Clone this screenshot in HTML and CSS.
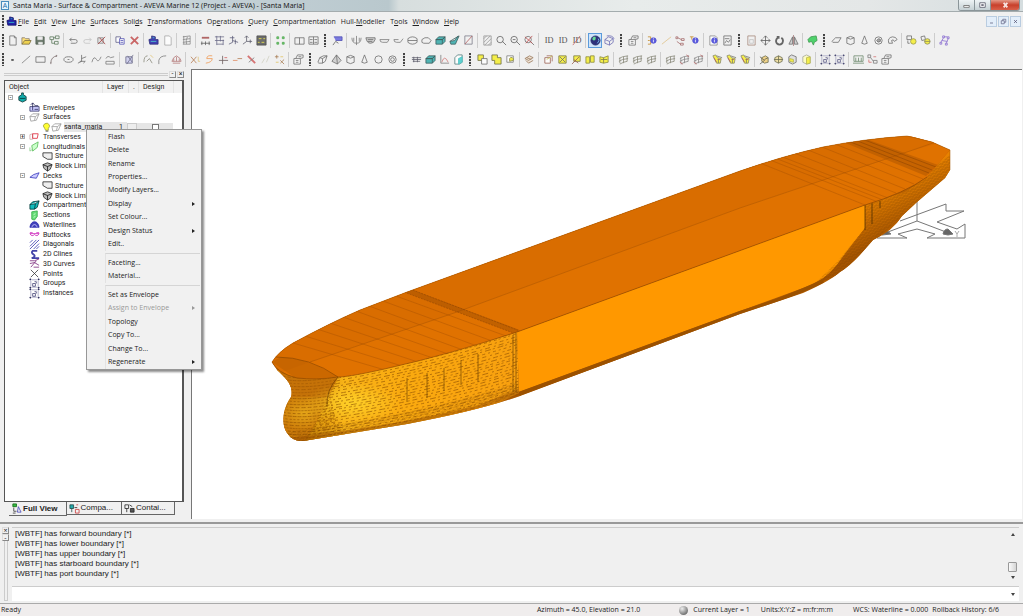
FILE: index.html
```
<!DOCTYPE html>
<html lang="en">
<head>
  <meta charset="UTF-8">
  <title>Santa Maria - Surface &amp; Compartment</title>
  <link rel="stylesheet" href="styles.css">
</head>
<body>
  <header class="titlebar">
    <span class="app-icon">A</span>
    <h1>Santa Maria - Surface &amp; Compartment - AVEVA Marine 12 (Project - AVEVA) - [Santa Maria]</h1>
    <div class="window-buttons">
      <button type="button" aria-label="Minimize" data-icon="winMin"></button>
      <button type="button" aria-label="Maximize" data-icon="winMax"></button>
      <button type="button" class="close" aria-label="Close" data-icon="winClose"></button>
    </div>
  </header>

  <nav class="menubar">
    <span class="grip"></span>
    <span class="icon" data-icon="ship"></span>
    <button type="button"><u>F</u>ile</button>
    <button type="button"><u>E</u>dit</button>
    <button type="button"><u>V</u>iew</button>
    <button type="button"><u>L</u>ine</button>
    <button type="button"><u>S</u>urfaces</button>
    <button type="button">Soli<u>d</u>s</button>
    <button type="button"><u>T</u>ransformations</button>
    <button type="button">Op<u>e</u>rations</button>
    <button type="button"><u>Q</u>uery</button>
    <button type="button"><u>C</u>ompartmentation</button>
    <button type="button">Hull-<u>M</u>odeller</button>
    <button type="button">T<u>o</u>ols</button>
    <button type="button"><u>W</u>indow</button>
    <button type="button"><u>H</u>elp</button>
    <div class="mdi-buttons">
      <button type="button" aria-label="Minimize document" data-icon="mdiMin"></button>
      <button type="button" aria-label="Restore document" data-icon="mdiMax"></button>
      <button type="button" aria-label="Close document" data-icon="mdiClose"></button>
    </div>
  </nav>

  <!-- "|" is a separator, "#" starts a new toolbar -->
  <div class="toolbar" data-tools="# new open save tree | undo redo cancel | copy cut | ship page | mesh | dimRed dimGrid axes axes2 table | nodes | book book2 # layout | frame hull flat flat2 barrel cap block wedge diag | hatch zoom zoomOut zoomFit | id id idRed | globe cubeBlue # props | info line points infoPt | infoDoc chart # sheet move rotate mirror | greenCube # plane cyl cone torus sweep | copyYel rotYel | links"></div>
  <div class="toolbar" data-tools="# dot line2 rect arc ellipse spline curve wave | trim | curves fillet fan | crossOr swap plusRed dashOr cutRed dashes stars | props # slab pyramid cyl cone circle ring # bars block graph docCyan # union unionYel inter | stack | yelRed yelBox yelRed2 yelBook yelBook2 | grid3 grid3 grid3 | grid3 gridRed gridRed | yelTree yelTree yelTree | boxYel boxYel2 boxYel3 boxFull | group group | bench linkRed props"></div>

  <main class="workspace">
    <aside class="sidebar">
      <div class="dock">
        <span class="dock-lines"></span>
        <button type="button" aria-label="Collapse panel">-</button>
        <button type="button" aria-label="Close panel">×</button>
      </div>
      <div class="tree-panel">
        <div class="tree-head"><span>Object</span><span>Layer</span><span>.</span><span>Design</span><span></span></div>
        <ul class="tree">
          <li class="root"><b class="exp">-</b><i data-icon="boat"></i></li>
          <li><b></b><i data-icon="envelope"></i>Envelopes</li>
          <li><b class="exp">-</b><i data-icon="cubeGrey"></i>Surfaces</li>
          <li class="leaf selected"><i data-icon="bulb"></i><i data-icon="cubeGrey"></i><span class="name">santa_maria</span><span class="layer">1</span><span class="swatch"></span><span class="check"><input type="checkbox" aria-label="Design"></span></li>
          <li><b class="exp">+</b><i data-icon="transverse"></i>Transverses</li>
          <li><b class="exp">-</b><i data-icon="longi"></i>Longitudinals</li>
          <li class="leaf"><i data-icon="structure"></i>Structure</li>
          <li class="leaf"><i data-icon="limit"></i>Block Limit</li>
          <li><b class="exp">-</b><i data-icon="deck"></i>Decks</li>
          <li class="leaf"><i data-icon="structure"></i>Structure</li>
          <li class="leaf"><i data-icon="limit"></i>Block Limit</li>
          <li><b></b><i data-icon="compart"></i>Compartments</li>
          <li><b></b><i data-icon="section"></i>Sections</li>
          <li><b></b><i data-icon="water"></i>Waterlines</li>
          <li><b></b><i data-icon="buttock"></i>Buttocks</li>
          <li><b></b><i data-icon="diagonal"></i>Diagonals</li>
          <li><b></b><i data-icon="cline"></i>2D Clines</li>
          <li><b></b><i data-icon="curve3"></i>3D Curves</li>
          <li><b></b><i data-icon="cross"></i>Points</li>
          <li><b></b><i data-icon="group"></i>Groups</li>
          <li><b></b><i data-icon="group"></i>Instances</li>
        </ul>
      </div>
      <div class="tabs">
        <button type="button" class="active"><i data-icon="tabFull"></i>Full View</button>
        <button type="button"><i data-icon="tabComp"></i>Compa...</button>
        <button type="button"><i data-icon="tabCont"></i>Contai...</button>
      </div>
    </aside>

    <section class="viewport">
      <svg class="scene" viewBox="192 70 830 449" preserveAspectRatio="xMidYMid meet" role="img" aria-label="Hull model">
        <defs>
          <clipPath id="hull"><path d="M272 362Q278 352 293 343Q330 323 360 310L407 292L740 171Q783 156 823 147Q863 139 907 136L913 137L932 142L950 150V170L945 178L917 202L902 216Q893 231 873 240Q866 248 860 255Q850 266 840 272Q830 281 803 293L740 314L560 381L520 396Q477 411 407 424L303 441Q293 442 287 433Q282 426 284 413Q286 404 291 397Q293 390 289 383Q285 377 277 370Z"/></clipPath>
          <clipPath id="deck"><path d="M272 362Q278 352 293 343Q330 323 360 310L407 292L740 171Q783 156 823 147Q863 139 907 136L913 137L932 142L950 150L927 177Q905 193 865 205L517 332Q450 354 393 367Q350 377 338 377Q315 380 297 378Q277 372 272 362Z"/></clipPath>
          <clipPath id="side"><path d="M338 377Q450 354 517 332L519 393L480 409L303 441Q316 425 325 405Z"/></clipPath>
          <clipPath id="bulb"><path d="M280 372L297 378L338 377L330 395L336 420L350 445H280Z"/></clipPath>
          <pattern id="dense" width="5" height="3" patternUnits="userSpaceOnUse" patternTransform="rotate(-24)">
            <path d="M0 1h3M3 2h2" stroke="#6e3c00" stroke-width="1"/>
          </pattern>
          <linearGradient id="bowFill" x1="300" y1="0" x2="518" y2="0" gradientUnits="userSpaceOnUse">
            <stop offset="0" stop-color="#c98207"/><stop offset=".2" stop-color="#f8b318"/><stop offset=".5" stop-color="#fbaa10"/><stop offset="1" stop-color="#f8a010"/>
          </linearGradient>
          <radialGradient id="shine">
            <stop offset="0" stop-color="#ffd028"/><stop offset="1" stop-color="#ffd028" stop-opacity="0"/>
          </radialGradient>
          <linearGradient id="sternFill" x1="870" y1="200" x2="890" y2="235" gradientUnits="userSpaceOnUse">
            <stop offset="0" stop-color="#e98200"/><stop offset="1" stop-color="#a85500"/>
          </linearGradient>
        </defs>

        <!-- coordinate axes -->
        <g fill="none" stroke="#777">
          <path d="M917 198V221L946 232M917 221L880 235M900 221L946 204V211H964L937 222L957 229L965 224V238H927L935 234L917 229L898 234L907 238H877"/>
          <path d="M943 234Q944 229 948 229L953 234Q948 236 943 234ZM882 235L886 230L891 234Z" fill="#666"/>
          <path d="M955 231L957 234L959 231M957 234V237" stroke="#aaa"/>
        </g>

        <g clip-path="url(#hull)">
          <path fill="#b86000" d="M260 120H960V450H260Z"/>
          <path fill="#ff9800" d="M517 332L865 205V228Q850 247 837 265Q823 282 803 288L740 311L519 392Z"/>
          <path fill="url(#sternFill)" d="M865 205L905 192L927 177L950 150V178L905 216L873 242L840 274L803 290Q823 282 837 265Q850 247 865 228Z"/>
          <path fill="url(#dense)" opacity=".45" d="M865 205L905 192L950 155V178L905 214L873 242L840 274L810 288L837 262L865 228Z"/>
          <path stroke="#3f2500" stroke-width="1" fill="none" d="M865 205V230M872 203V224M880 201V208" opacity=".7"/>
          <path fill="none" stroke="#9b5100" stroke-width="4" d="M519 394L740 313Q795 295 823 281"/>
        </g>

        <!-- bow plating -->
        <g clip-path="url(#hull)">
          <path fill="#cc7c0a" d="M270 370H345V446H270Z"/>
          <path fill="url(#bowFill)" d="M338 377Q450 354 517 332L519 393L480 412L303 445Q316 425 325 405Z"/>
          <ellipse cx="352" cy="403" rx="48" ry="20" fill="url(#shine)"/>
          <ellipse cx="304" cy="413" rx="24" ry="18" fill="url(#shine)" opacity=".5"/>
          <g class="strakes" clip-path="url(#side)"></g>
          <g class="bulb-lines" clip-path="url(#bulb)"></g>
          <path fill="#b86206" opacity=".35" d="M280 370L297 378H338L326 397H285Z"/>
          <path fill="none" stroke="#9c5000" stroke-width="10" opacity=".5" d="M287 443Q400 430 480 410L520 394"/>
          <path fill="url(#dense)" opacity=".4" d="M285 432Q420 415 519 382V395L400 427L290 444Z"/>
          <path fill="none" stroke="#633800" stroke-width="1" opacity=".6" d="M338 377Q326 390 327 406M513 335V392M516 333V392M407 378V402M427 373V398M444 368V391M461 360V385M478 354V382"/>
        </g>

        <!-- deck -->
        <g clip-path="url(#deck)">
          <path fill="#e07200" d="M260 120H960V390H260Z"/>
          <path fill="#d96d00" d="M260 380L310 362L457 312L740 208L910 151L950 140V120H260Z"/>
          <path fill="none" stroke="#a95500" stroke-width="1" opacity=".5" d="M310 362L457 312L740 208L847 172L910 151L950 137"/>
          <path class="frame-lines" d="M396 296L506 336M383 301L492 341M369 306L477 346M356 311L463 350M343 317L448 354M330 323L433 358M317 329L418 362M305 336L402 366M293 343L385 370"/>
          <path class="frame-lines" d="M760 163L865 205M770 160L878 202M775 158L883 200M780 156L888 198M794 153L896 193M808 150L905 189M822 147L914 184M835 144L923 179"/>
          <path fill="none" stroke="#934800" stroke-width="5" opacity=".4" d="M406 290L518 332"/>
          <path fill="none" stroke="#783a00" stroke-width="1" stroke-dasharray="2 1" opacity=".4" d="M410 289L520 331M404 292L516 334"/>
          <path fill="#a75200" opacity=".45" d="M843 142L866 139L938 165L926 176Z"/>
          <path fill="none" stroke="#783900" stroke-width="1" opacity=".4" d="M848 141L929 173M855 140L932 170M862 139L936 167"/>
          <path fill="#ac5b00" opacity=".4" d="M272 362L281 357Q310 359 338 377L297 379Z"/>
          <path fill="none" stroke="#8d4900" stroke-width="1" opacity=".7" d="M276 357Q310 357 338 377"/>
        </g>
        <path fill="none" stroke="#854300" stroke-width="1" opacity=".6" d="M272 362Q277 373 297 378Q315 380 338 377Q350 377 393 367Q450 354 517 332L865 205Q905 193 927 177"/>
        <path fill="none" stroke="#a25300" stroke-width="1" opacity=".5" d="M272 362Q278 352 293 343Q330 323 360 310L407 292L740 171Q783 156 823 147Q863 139 907 136L932 142L950 150V170"/>
      </svg>
    </section>

    <div class="context-menu" role="menu">
      <div class="group nine">
        <button type="button" role="menuitem">Flash</button>
        <button type="button" role="menuitem">Delete</button>
        <button type="button" role="menuitem">Rename</button>
        <button type="button" role="menuitem">Properties...</button>
        <button type="button" role="menuitem">Modify Layers...</button>
        <button type="button" role="menuitem" class="sub">Display</button>
        <button type="button" role="menuitem">Set Colour...</button>
        <button type="button" role="menuitem" class="sub">Design Status</button>
        <button type="button" role="menuitem">Edit..</button>
      </div>
      <div class="group two">
        <button type="button" role="menuitem">Faceting...</button>
        <button type="button" role="menuitem">Material...</button>
      </div>
      <div class="group six">
        <button type="button" role="menuitem">Set as Envelope</button>
        <button type="button" role="menuitem" class="sub" disabled>Assign to Envelope</button>
        <button type="button" role="menuitem">Topology</button>
        <button type="button" role="menuitem">Copy To...</button>
        <button type="button" role="menuitem">Change To...</button>
        <button type="button" role="menuitem" class="sub">Regenerate</button>
      </div>
    </div>
  </main>

  <section class="console">
    <div class="console-dock">
      <button type="button" aria-label="Close console">×</button>
      <button type="button" aria-label="Collapse console">-</button>
      <span></span>
    </div>
    <div class="console-body">
      <div class="log">
        <div class="lines">
          <p>[WBTF] has forward boundary [*]</p>
          <p>[WBTF] has lower boundary [*]</p>
          <p>[WBTF] has upper boundary [*]</p>
          <p>[WBTF] has starboard boundary [*]</p>
          <p>[WBTF] has port boundary [*]</p>
        </div>
        <div class="scrollbar"><span class="up"></span><span class="thumb"></span><span class="down"></span></div>
      </div>
      <div class="command">
        <input type="text" aria-label="Command">
        <button type="button" aria-label="Command history"><span class="down"></span></button>
      </div>
    </div>
  </section>

  <footer class="statusbar">
    <span class="ready">Ready</span>
    <span class="view">Azimuth = 45.0, Elevation = 21.0</span>
    <span class="current"><i class="ball"></i>Current Layer = 1</span>
    <span class="units">Units:X:Y:Z = m:fr:m:m</span>
    <span class="wcs">WCS: Waterline = 0.000</span>
    <span>Rollback History: 6/6</span>
  </footer>

  <script src="app.js"></script>
</body>
</html>
```

FILE: styles.css
```
* {
  box-sizing: border-box;
}

body {
  margin: 0;
  height: 100vh;
  display: flex;
  flex-direction: column;
  overflow: hidden;
  background: #f0f0f0;
  color: #222;
  font-family: "Open Sans", "Noto Sans", sans-serif;
  font-size: 7px;
  line-height: 10px;
}

button {
  margin: 0;
  padding: 0;
  border: 0;
  background: none;
  color: inherit;
  font: inherit;
  white-space: nowrap;
}

svg {
  display: block;
}

[data-icon] svg,
.toolbar svg {
  width: 11px;
  height: 11px;
  fill: none;
  stroke: #555;
  stroke-width: 1;
  stroke-opacity: 0.85;
}

.toolbar svg {
  opacity: 0.85;
}

/* title bar */
.titlebar {
  display: flex;
  height: 12px;
  align-items: center;
  padding-left: 1px;
  background: linear-gradient(to right, #dfe6e9 0, #c3d0d6 22%, #b9c8cd 38%, #d7dede 39%, #e8eceb 62%, #e4e7e7 85%, #d5dddf 100%);
  border-bottom: 1px solid #a4acae;
}

.app-icon {
  width: 8px;
  height: 9px;
  border: 1px solid #4a8dbd;
  background: #e8f5fd;
  color: #1d6ea8;
  line-height: 7px;
  text-align: center;
}

.titlebar h1 {
  flex: 1;
  margin: 0 0 0 4px;
  font-family: "Noto Sans", sans-serif;
  font-size: 7px;
  font-weight: normal;
}

.window-buttons {
  display: flex;
  align-self: flex-start;
  margin-right: 3px;
  border: 1px solid #8a9599;
  border-top: 0;
  border-radius: 0 0 3px 3px;
  overflow: hidden;
}

.window-buttons button {
  display: flex;
  justify-content: center;
  width: 16px;
  height: 10px;
  background: linear-gradient(#eef3f5, #c5d0d4);
  border-right: 1px solid #8a9599;
}

.window-buttons .close {
  width: 28px;
  border: 0;
  background: linear-gradient(#e39a88, #c8402b 50%, #d9604a);
}

/* menu bar */
.menubar {
  display: flex;
  align-items: center;
  gap: 5px;
  height: 19px;
  padding: 0 2px;
}

.menubar .icon {
  margin-left: -3px;
  margin-right: -4px;
}

.grip {
  width: 2px;
  height: 13px;
  background: repeating-linear-gradient(#444 0 2px, #ddd 2px 3px);
}

.mdi-buttons {
  display: flex;
  gap: 1px;
  margin-left: auto;
}

.mdi-buttons button {
  width: 11px;
  height: 11px;
  border: 1px solid #b9cce0;
  background: #e3eefa;
}

.mdi-buttons svg {
  width: 9px;
  height: 9px;
}

/* toolbars */
.toolbar {
  display: flex;
  align-items: center;
  height: 19px;
}

.toolbar button {
  display: flex;
  justify-content: center;
  width: 14px;
  height: 15px;
  align-items: center;
}

.toolbar button.on {
  border: 1px solid #5b9bdc;
  background: #cfe4fa;
}

.toolbar .sep {
  width: 1px;
  height: 15px;
  margin: 0 2px;
  background: #cdcdcd;
}

.toolbar .grip {
  margin: 0 4px;
}

.toolbar .grip:first-child {
  margin: 0 1px 0 2px;
}

/* workspace */
.workspace {
  position: relative;
  flex: 1;
  min-height: 0;
  display: flex;
  padding-bottom: 3px;
}

.sidebar {
  width: 191px;
  display: flex;
  flex-direction: column;
  padding: 0 7px 3px 4px;
  font-family: Roboto, "Liberation Sans", sans-serif;
}

.dock {
  display: flex;
  gap: 1px;
  height: 11px;
  align-items: center;
}

.dock-lines {
  flex: 1;
  height: 3px;
  border-top: 1px solid #ccc;
  border-bottom: 1px solid #ccc;
}

.dock button,
.console-dock button {
  width: 7px;
  height: 7px;
  border: 1px solid #888;
  border-top-color: #ddd;
  border-left-color: #ddd;
  line-height: 5px;
}

.tree-panel {
  flex: 1;
  min-height: 0;
  background: #fff;
  border: 1px solid #555;
  border-right-width: 2px;
}

.tree-head {
  display: grid;
  grid-template-columns: 98px 26px 10px 35px 1fr;
  height: 12px;
  background: #f2f2f2;
}

.tree-head span {
  padding-left: 4px;
  border-right: 1px solid #e4e4e4;
  line-height: 12px;
}

.tree-head span:last-child {
  border: 0;
}

.tree {
  display: grid;
  grid-auto-rows: 1fr;
  height: 205px;
  margin: 0;
  padding: 0;
  list-style: none;
}

.tree li {
  display: flex;
  align-items: center;
  padding-left: 15px;
  min-height: 0;
}

.tree li.root {
  padding-left: 3px;
}

.tree li.leaf {
  padding-left: 37px;
}

.tree b {
  width: 5px;
  height: 5px;
  margin-right: 4px;
}

.tree .exp {
  border: 1px solid #aaa;
  color: #333;
  font-size: 5px;
  line-height: 3px;
  text-align: center;
}

.tree i {
  margin-right: 3px;
}

.tree .leaf i {
  margin-right: 2px;
}

.tree .leaf.selected {
  padding-left: 36px;
}

.tree .leaf.selected i {
  margin-right: -1px;
}

.tree .selected .name {
  width: 55px;
  margin-left: 3px;
  background: #e6e6e6;
}

.tree .selected .layer {
  width: 8px;
  background: #e6e6e6;
}

.tree .swatch {
  width: 10px;
  height: 8px;
  border: 1px solid #ccc;
  background: #eee;
}

.tree .check {
  display: flex;
  justify-content: center;
  width: 36px;
  background: #e6e6e6;
}

.tree input {
  appearance: none;
  width: 7px;
  height: 7px;
  margin: 1px 0;
  border: 1px solid #777;
  background: #fff;
}

.tabs {
  display: flex;
  align-items: flex-start;
  padding-left: 5px;
  font-family: "Liberation Sans", sans-serif;
  font-size: 8px;
}

.tabs button {
  display: flex;
  align-items: center;
  height: 13px;
  padding: 0 8px 0 2px;
  border: 1px solid #666;
  border-width: 0 1px 1px 0;
}

.tabs .active {
  height: 14px;
  padding-right: 8px;
  font-weight: bold;
}

.tabs i {
  margin-right: 1px;
}

.viewport {
  flex: 1;
  min-width: 0;
  margin-right: 1px;
  border: 1px solid #777;
  border-width: 1px 0 0 1px;
  background: #fff;
}

.scene {
  width: 100%;
  height: 100%;
}

.frame-lines {
  fill: none;
  stroke: #9a4b00;
  stroke-width: 1;
  opacity: .35;
}

.strakes,
.bulb-lines {
  fill: none;
  stroke: #8a4c00;
  stroke-width: 1;
  opacity: .6;
}

/* context menu over the tree */
.context-menu {
  position: absolute;
  left: 86px;
  top: 60px;
  width: 116px;
  padding: 0 1px;
  background: #f1f1f1;
  border: 1px solid #979797;
  box-shadow: 2px 2px 2px rgba(0, 0, 0, 0.45);
}

.group {
  display: grid;
  grid-auto-rows: 1fr;
  border-left: 1px solid #e2e2e2;
  margin-left: 17px;
}

.group + .group {
  margin-top: 2px;
  padding-top: 2px;
  border-top: 1px solid #d5d5d5;
}

.nine {
  height: 121px;
}

.two {
  height: 30px;
}

.six {
  height: 84px;
}

.group button {
  display: flex;
  align-items: center;
  justify-content: space-between;
  padding: 0 5px 0 2px;
}

.group button:disabled {
  color: #999;
}

.group .sub::after {
  content: "";
  border: 2px solid transparent;
  border-left: 3px solid currentColor;
  border-right: 0;
}

/* console */
.console {
  display: flex;
  gap: 3px;
  padding: 3px 4px 2px 2px;
  border-top: 2px solid #999;
}

.console-dock {
  display: flex;
  flex-direction: column;
  width: 7px;
}

.console-dock span {
  flex: 1;
  width: 4px;
  margin-left: 2px;
  border: 1px solid #ccc;
  border-width: 0 1px 1px;
}

.console-body {
  flex: 1;
}

.log {
  display: flex;
  justify-content: space-between;
  height: 60px;
  padding: 1px 1px 0 3px;
  border-top: 1px solid #ccc;
  border-bottom: 1px solid #ccc;
  font-family: "Liberation Sans", sans-serif;
  font-size: 8px;
}

.lines {
  display: grid;
  grid-auto-rows: 1fr;
  height: 49px;
}

.log p {
  margin: 0;
}

.scrollbar {
  display: flex;
  flex-direction: column;
  align-items: center;
  width: 11px;
  padding: 4px 0 7px;
}

.up,
.down {
  border: 2px solid transparent;
}

.up {
  border-top: 0;
  border-bottom: 3px solid #444;
}

.down {
  border-bottom: 0;
  border-top: 3px solid #444;
}

.thumb {
  width: 9px;
  height: 10px;
  margin: auto 0 4px;
  border: 1px solid #999;
  border-radius: 1px;
  background: linear-gradient(to right, #fafafa, #d5d5d5);
}

.command {
  display: flex;
  height: 14px;
  background: #fff;
}

.command input {
  flex: 1;
  min-width: 0;
  padding: 0 3px;
  border: 0;
  font-size: 8px;
}

.command button {
  display: flex;
  justify-content: center;
  align-items: center;
  width: 12px;
}

/* status bar */
.statusbar {
  display: flex;
  align-items: center;
  height: 13px;
  padding: 0 24px 0 1px;
  border-top: 1px solid #aaa;
  background: #f0eded;
}

.ready {
  flex: 1;
}

.view {
  margin-right: 39px;
}

.current {
  display: flex;
  align-items: center;
  gap: 5px;
  margin-right: 11px;
}

.units {
  margin-right: 20px;
}

.wcs {
  margin-right: 4px;
}

.ball {
  width: 9px;
  height: 9px;
  border-radius: 50%;
  background: radial-gradient(circle at 35% 30%, #eee, #999 50%, #444);
}
```

FILE: app.js
```
// small path helper: d, stroke, fill
function p(d, stroke, fill) {
  return '<path d="' + d + '" stroke="' + (stroke || '#555') + '" fill="' + (fill || 'none') + '"/>';
}

const yel = '#f5ee2e';
const cube = 'M1 5L4 2H11L8 5ZM1 5H8V10H1ZM8 5L11 2V7L8 10';
const slab = 'M1 9L3 4L7 2H11L9 8L6 10H2ZM3 4L6 5L11 2M6 5V10';
const grid = 'M1 5L5 3L11 2M1 8L5 6L11 5M2 11L6 9L10 8M2 4V10M6 3V10M10 2V8';
const ring = 'M6 2A4 4 0 1 1 6 10A4 4 0 1 1 6 2';
const info = p('M4 6A3 3 0 1 1 10 6A3 3 0 1 1 4 6', '#33c', '#44d') + p('M7 5V8M7 3V4', '#fff');

const icons = {
  winMin: p('M3 6H9V8H3Z', '#666', '#fff'),
  winMax: p('M3 3H9V8H3ZM5 5H7V6H5Z', '#556', '#fff'),
  winClose: '<g stroke-width="2">' + p('M4 3L8 8M8 3L4 8', '#fff') + '</g>',
  mdiMin: p('M4 8H8', '#446'),
  mdiMax: p('M3 5H7V9H3ZM5 5V3H9V7H7', '#557'),
  mdiClose: p('M4 4L8 8M8 4L4 8', '#446'),
  ship: p('M1 5L4 4V1L8 2V5H11V10H2Z', '#116', '#22a') + p('M3 7H9M5 3H7', '#3cc'),
  'new': p('M3 1H8L10 3V11H3ZM8 1V3H10'),
  open: p('M1 10V3H4L5 4H9V6', '#765', '#fd6') + p('M1 10L4 6H11L9 10Z', '#652', '#ec3'),
  save: p('M1 2H10V10H1Z', '#343', '#565') + p('M3 2H8V5H3ZM4 8H8V10H4Z', '#ddd', '#eee'),
  tree: p('M1 2H5V5H1ZM7 1H11V4H7ZM6 7H10V10H6ZM3 5V9H6M5 3H7', '#464'),
  undo: p('M4 3L2 5L4 7M2 5H8Q10 5 10 7Q10 9 8 9H3'),
  redo: p('M8 3L10 5L8 7M10 5H4Q2 5 2 7Q2 9 4 9H9', '#bbb'),
  cancel: p('M2 3H8V9H2Z', '#777', '#ddd') + p('M2 10L10 2M4 3L10 10', '#922'),
  copy: p('M1 2H6V8H1Z', '#447', '#fff') + p('M5 4H10V10H5ZM6 6H9M6 8H9', '#33a', '#fff'),
  cut: '<g stroke-width="2">' + p('M2 2L10 10M10 2L2 10', '#b33') + '</g>',
  page: p('M3 1H8L10 3V11H3Z', '#999', '#fff'),
  mesh: p('M2 2L10 1M2 5L10 4M2 8L10 7M2 10L10 10M3 1V10M7 2Q5 6 6 10M10 1V10', '#777'),
  dimRed: '<g stroke-width="2">' + p('M2 3H10', '#933') + '</g>' + p('M1 9H11M2 7V11M6 7V11M10 7V11', '#444'),
  dimGrid: p('M1 2H11M1 6H11M3 1V11M7 1V7M10 5V11M3 10H10', '#557'),
  axes: p('M5 1V8L1 10M5 6L11 8M2 3H7M8 5V10', '#446'),
  axes2: p('M5 1V7L1 10M5 7H11M9 5V9M3 3L5 1L7 3', '#445'),
  table: p('M1 1H11V11H1Z', '#333', '#555') + p('M3 4H6M8 4H10M2 8H4M6 8H9', yel),
  nodes: p('M2 2H4V4H2ZM8 2H10V4H8ZM2 8H4V10H2ZM8 8H10V10H8Z', '#393', '#6c6'),
  book: p('M1 3H11V10H1ZM6 3V10'),
  book2: p('M1 2H11V10H1ZM6 2V10M2 5H5M7 5H10M2 8H5M7 8H10'),
  layout: p('M2 2H11V6H4', '#33a', '#66d') + p('M1 11L4 7L7 9', '#444'),
  frame: p('M6 1V11M1 3Q1 9 6 9Q11 9 11 3M3 3V7M9 3V7', '#666'),
  hull: p('M1 3H11V5Q10 9 6 9Q2 9 1 3M3 5H9M3 7H8', '#555', '#ccc'),
  flat: p('M1 5H11L9 8H4Q1 8 1 5', '#666'),
  flat2: p('M1 5Q1 8 4 8H8L11 4M1 5H6', '#666'),
  barrel: p('M1 4Q6 0 11 4V8Q6 12 1 8ZM1 6H11'),
  cap: p('M1 8V5Q4 2 8 3L11 6L9 9H3Z'),
  block: p(cube, '#244', '#3aa'),
  wedge: p('M1 7L4 5L11 1L7 10L2 10ZM1 7L6 6L10 1', '#244', '#3aa'),
  diag: p('M2 1H10V10H2Z', '#667') + p('M2 10L10 1', '#a44'),
  hatch: p('M2 1H10V11H2ZM2 4L5 1M2 8L9 1M3 11L10 4M7 11L10 8', '#888'),
  zoom: p('M1 5A3 3 0 1 1 8 5A3 3 0 1 1 1 5M7 7L11 11', '#444'),
  zoomOut: p('M1 5A3 3 0 1 1 8 5A3 3 0 1 1 1 5M7 7L11 11M3 5H6', '#444'),
  zoomFit: p('M1 5A3 3 0 1 1 8 5A3 3 0 1 1 1 5M7 7L11 11', '#555') + p('M1 2L9 9M9 1L2 9', '#b33'),
  id: '<text x="2" y="9" fill="#333" stroke="none">ID</text>',
  idRed: '<text x="2" y="9" fill="#333" stroke="none">ID</text>' + p('M2 11L10 1', '#b44'),
  globe: p('M6 1A5 5 0 1 1 6 11A5 5 0 1 1 6 1', '#115', '#116') + p('M4 2Q1 5 4 6Q7 6 6 2', 'none', '#5d8') + p('M9 4Q11 6 8 9', '#7cf'),
  cubeBlue: p('M1 5L5 2L10 4V8L6 11L1 9ZM1 5L6 7L10 4M6 7V11M3 1Q9 0 11 4', '#55a'),
  props: p('M1 5H8V11H1Z', '#555', '#fff') + p('M3 5L5 1H11V4L8 5M3 7H6M3 9H6M6 3H9', '#555'),
  info: p('M1 2H4V10H1M1 6H3', '#b70') + info,
  line: p('M1 10L11 2', '#db7'),
  line2: p('M1 10L10 2', '#666'),
  points: p('M1 2H3V4H1ZM7 4H10V6H7ZM6 9H9V11H6ZM3 3L7 5M2 7L6 10', '#955'),
  infoPt: p('M1 2H5M3 2V5', '#b70') + info,
  infoDoc: p('M2 1H8L10 3V11H2Z', '#777', '#fff') + info,
  chart: p('M2 1H10V11H2ZM3 4H8M3 9L5 6L7 8L9 5'),
  sheet: p('M2 1H10V11H2Z', '#976') + p('M4 5H8V9H4Z', '#bbb'),
  move: p('M6 1V11M1 6H11M4 3L6 1L8 3M4 9L6 11L8 9M3 4L1 6L3 8M9 4L11 6L9 8', '#444'),
  rotate: '<g stroke-width="2">' + p('M4 3Q1 6 3 9Q6 12 9 9Q11 5 8 3M3 2H5V4', '#333') + '</g>',
  mirror: p('M5 2V10H1ZM7 2V10H11Z', '#555', '#ccc') + p('M6 0V12', '#966'),
  greenCube: p('M1 5L4 2L10 1L11 6L8 8L7 11L5 7L2 8Z', '#283', '#3c5'),
  plane: p('M1 7L5 3H11L8 8H2Z'),
  cyl: p('M2 3Q6 0 10 3V9Q6 12 2 9ZM2 3Q6 6 10 3'),
  cone: p('M6 1L9 9Q6 11 3 9Z'),
  torus: p(ring) + p('M6 4Q9 4 8 7Q5 9 4 6Z', '#555', '#999'),
  sweep: p('M2 9Q0 3 6 2Q10 2 11 5L8 7Q7 4 5 6L6 9Z'),
  copyYel: p('M1 1H6V5H1Z') + p('M5 7A3 3 0 1 1 11 7A3 3 0 1 1 5 7', '#883', yel) + p('M2 6V9H4'),
  rotYel: p('M1 2L5 1L6 5L2 6Z') + p('M5 7A3 3 0 1 1 11 7A3 3 0 1 1 5 7M5 7H11', '#774', yel),
  links: p('M4 1H6V3H4ZM9 2H11V4H9ZM1 8H3V10H1ZM7 9H9V11H7ZM5 3L2 8M10 4L8 9M3 6L9 7M6 2H9', '#75c'),
  dot: p('M5 6H7V7H5Z', '#333', '#333'),
  rect: p('M1 3H11V9H1Z'),
  arc: p('M2 10Q2 3 9 2M2 9V11M8 1V3', '#655'),
  ellipse: p('M1 6Q1 3 6 3Q11 3 11 6Q11 9 6 9Q1 9 1 6M5 6H7'),
  spline: p('M5 1V8L1 10M5 5L10 3M3 8H9L7 10', '#555'),
  curve: p('M1 9Q3 1 6 6Q8 10 11 3', '#666'),
  wave: p('M1 5Q3 1 6 4L10 3M1 8H10V11H1Z', '#666'),
  trim: p('M2 3H9V10H2ZM10 1L3 11M4 2L9 9', '#557', '#cce'),
  curves: p('M1 9Q1 2 5 2M4 8L7 5L10 10', '#776') + p('M8 1L11 4', '#db5'),
  fillet: p('M2 11V7Q3 2 10 2', '#666'),
  fan: p('M1 8L3 4L6 2L10 5L11 8ZM3 8V5M6 8V3M9 8V5M2 10H10', '#a66'),
  crossOr: p('M1 3L7 10M7 3L1 10', '#a63') + p('M9 3V8H11', '#db6'),
  swap: p('M9 2Q3 1 3 5H9Q9 9 2 10', '#e83'),
  plusRed: p('M1 7H11M5 2V11', '#544') + p('M7 4H10', '#c44'),
  dashOr: p('M1 7H6', '#d74') + p('M6 5H11', '#a63'),
  cutRed: '<g stroke-width="2">' + p('M2 2L10 10', '#c44') + '</g>' + p('M3 9L9 4', '#666'),
  dashes: p('M2 10L5 5M7 9L10 2', '#ccb'),
  stars: p('M1 3H5M3 1V5M7 7L11 11M11 6L7 10', '#963') + p('M7 3H10M2 9H5', '#db4'),
  slab: p(slab),
  pyramid: p('M6 1L1 8L7 11L11 7ZM6 1L7 11', '#555', '#ccc'),
  circle: p(ring),
  ring: p(ring) + p('M6 4A2 2 0 1 1 6 8A2 2 0 1 1 6 4'),
  bars: p('M1 4H11M1 6H11M2 8H10M3 3V9M7 3V9', '#445'),
  graph: p('M2 1V10H11', '#666') + p('M3 9Q6 0 10 9', '#c66'),
  docCyan: p('M2 4L5 1H10V9L7 11H2Z', '#366', '#fff') + p('M6 5L10 3V9L6 11Z', '#3bb', '#4cc'),
  union: p('M1 1H7V7H1Z', '#552', yel) + p('M5 5H11V11H5Z', '#555', '#fff'),
  unionYel: p('M1 1H7V4H11V11H4V7H1Z', '#552', yel),
  inter: p('M2 2H9V9H2Z', '#666', '#fff') + p('M5 5A2 2 0 1 1 9 7L5 8Z', '#773', yel),
  stack: p('M1 5L6 2L10 4L5 7ZM2 7L5 10L10 7M3 4L8 6', '#864', '#edc'),
  yelRed: p('M2 4H8V10H2ZM4 2H10V8', '#843', '#fff') + p('M4 6L10 2', '#bb3'),
  yelBox: p('M2 2H10V10H2Z', '#662', yel) + p('M3 3L9 9M9 3L3 9'),
  yelRed2: p('M3 2H10V8H3Z', '#662', yel) + p('M1 11L9 3M3 6L8 10', '#843'),
  yelBook: p('M1 3H5V10H1ZM6 2H10V9H6Z', '#772', yel),
  yelBook2: p('M1 3L5 4L10 2V9L5 10L1 9Z', '#772', yel) + p('M5 4V10M2 6H9', '#663'),
  grid3: p(grid, '#776'),
  gridRed: p(grid, '#777') + p('M1 9L4 11M8 1L11 3', '#b55'),
  yelTree: p('M1 2L4 1L6 4L10 5L9 10L5 10Z', '#775', yel) + p('M2 4L5 9M6 6H9', '#a44') + p('M5 2L11 4M7 5V10', '#665'),
  boxYel: p('M3 4L7 2L10 4V9L6 10L3 8Z', '#553', '#ec7') + p('M1 3L6 7L1 11M6 6L10 4', '#443'),
  boxYel2: p('M2 4L6 2L10 4V8L6 10L2 8ZM1 6H11M6 2V10', '#553', '#ed9'),
  boxYel3: p('M2 3L5 1L10 3V9L6 11L2 9Z', '#555', '#ddd') + p('M3 5L7 6V9L3 8Z', '#aa3', yel),
  boxFull: p('M2 3L6 1L10 3V10L6 11L2 9Z', '#998', '#ffb') + p('M6 4L10 3V10L6 11Z', '#aa3', yel),
  group: p('M3 2H9M3 10H9M2 3V9M10 3V9', '#99b') + p('M4 6H7V9H4ZM6 4H8V6', '#447') + p('M1 1H2V2H1ZM10 1H11V2H10ZM1 10H2V11H1ZM10 10H11V11H10Z', '#225', '#225'),
  bench: p('M1 2H11V8H1ZM3 4V8M6 4V8M9 4V8M0 10H12', '#575'),
  linkRed: p('M1 1H4V4H1ZM7 7H11V10H7ZM4 4L7 8', '#666') + p('M2 6V9H5M7 3H10', '#c55'),
  boat: p('M2 5L5 3V1H7V3L10 5V9L6 11L2 9Z', '#133', '#1aa') + p('M3 7H9', '#033'),
  envelope: p('M1 5H11V10H1Z', '#336', '#ccf') + p('M4 1V9M2 3L4 1L6 3M6 4H10M6 8H10', '#225'),
  cubeGrey: p('M1 5L4 2H11L8 9L2 10ZM1 5H7L11 2M7 5L6 9', '#999'),
  bulb: p('M4 7Q1 4 4 2Q7 0 9 3Q10 5 8 7V9H5Z', '#994', '#ff3') + p('M5 10H8', '#444'),
  transverse: p('M1 4L4 3V9H1Z', '#caa') + p('M4 3H10L9 8H4Z', '#d23'),
  longi: p('M3 5L10 1L9 7L4 11Z', '#5b5', '#cfc') + p('M1 7V11L4 9', '#8c8'),
  structure: p('M1 2H11V9H6L1 6Z', '#222', '#eee'),
  limit: p('M1 4L6 2L11 4L9 9L6 11L2 8Z', '#222', '#bbb') + p('M1 4L6 6L11 4M6 6V11', '#111'),
  deck: p('M1 8L5 5L11 3L8 9Z', '#33b', '#ccf'),
  compart: p('M1 5L4 2L11 1L9 8L6 10H1ZM1 5L7 4L11 1M7 4L6 10', '#033', '#1bb'),
  section: p('M3 2L9 1V7L6 11L3 10Z', '#3a4', '#6d7') + p('M5 5L7 4M5 8L7 7', '#dfd'),
  water: p('M1 9Q2 3 6 3Q10 3 11 9Z', '#22a', '#44b') + p('M3 9Q4 6 6 6Q8 6 9 9', '#ccf'),
  buttock: p('M1 5Q3 9 6 6Q9 9 11 5ZM1 4H4M8 4H11', '#c2b'),
  diagonal: p('M1 4L4 1M1 8L8 1M1 11L11 1M5 11L11 5M8 11L11 8', '#33a'),
  cline: '<g stroke-width="2">' + p('M9 2H4Q2 4 5 6Q8 8 3 10H11', '#229') + '</g>',
  curve3: p('M1 3H6L11 1M1 6L6 5L11 8M2 10L8 3M5 10H11', '#727'),
  cross: p('M2 2L10 10M10 2L2 10', '#333'),
  tabFull: p('M2 1H6V4H2Z', '#161', '#3b4') + p('M3 5V9H6M2 11H5', '#333') + p('M8 4L11 10H7Z', '#44b'),
  tabComp: p('M1 2H5V6H1ZM3 6V10', '#244', '#2aa') + p('M7 7H11V11H7ZM8 2H10', '#c33') + p('M6 5H9', '#222'),
  tabCont: p('M1 2H5V6H1ZM3 6V10M6 2L9 4', '#222') + p('M7 6H11V10H7Z', '#222', '#555')
};

function draw(name) {
  return '<svg viewBox="0 0 12 12" font-family="Liberation Serif, serif" font-size="9" aria-hidden="true">' + icons[name] + '</svg>';
}

document.querySelectorAll('[data-icon]').forEach(function (el) {
  el.innerHTML = draw(el.dataset.icon);
});

document.querySelectorAll('.toolbar').forEach(function (bar) {
  bar.dataset.tools.split(' ').forEach(function (name) {
    if (name === '#' || name === '|') {
      const mark = document.createElement('span');
      mark.className = name === '#' ? 'grip' : 'sep';
      bar.appendChild(mark);
      return;
    }
    const btn = document.createElement('button');
    btn.type = 'button';
    btn.title = name;
    if (name === 'globe') btn.className = 'on';
    btn.innerHTML = draw(name);
    bar.appendChild(btn);
  });
});

// hull plating: dashed curves swept from the sheer line down to the keel
function mix(a, b, t) {
  return Math.round(a + (b - a) * t);
}

let strakes = '';
for (let i = 0; i <= 22; i++) {
  const t = i / 22;
  strakes += '<path stroke-dasharray="' + (3 + i % 4) + ' ' + (2 + i % 3) + ' 2 3" d="M' +
    mix(338, 304, t) + ' ' + mix(378, 441, t) + 'Q' + mix(440, 420, t) + ' ' + mix(358, 426, t) +
    ' 519 ' + mix(333, 395, t) + '"/>';
}
document.querySelector('.strakes').innerHTML = strakes;

let bulb = '';
for (let i = 0; i <= 26; i++) {
  const y = 374 + i * 3;
  bulb += '<path stroke-dasharray="' + (2 + i % 3) + ' ' + (1 + i % 2) + '" d="M278 ' + (y - 2) +
    'Q' + (300 + i % 5) + ' ' + (y + 5) + ' 350 ' + (y - 6) + '"/>';
}
document.querySelector('.bulb-lines').innerHTML = bulb;
```
